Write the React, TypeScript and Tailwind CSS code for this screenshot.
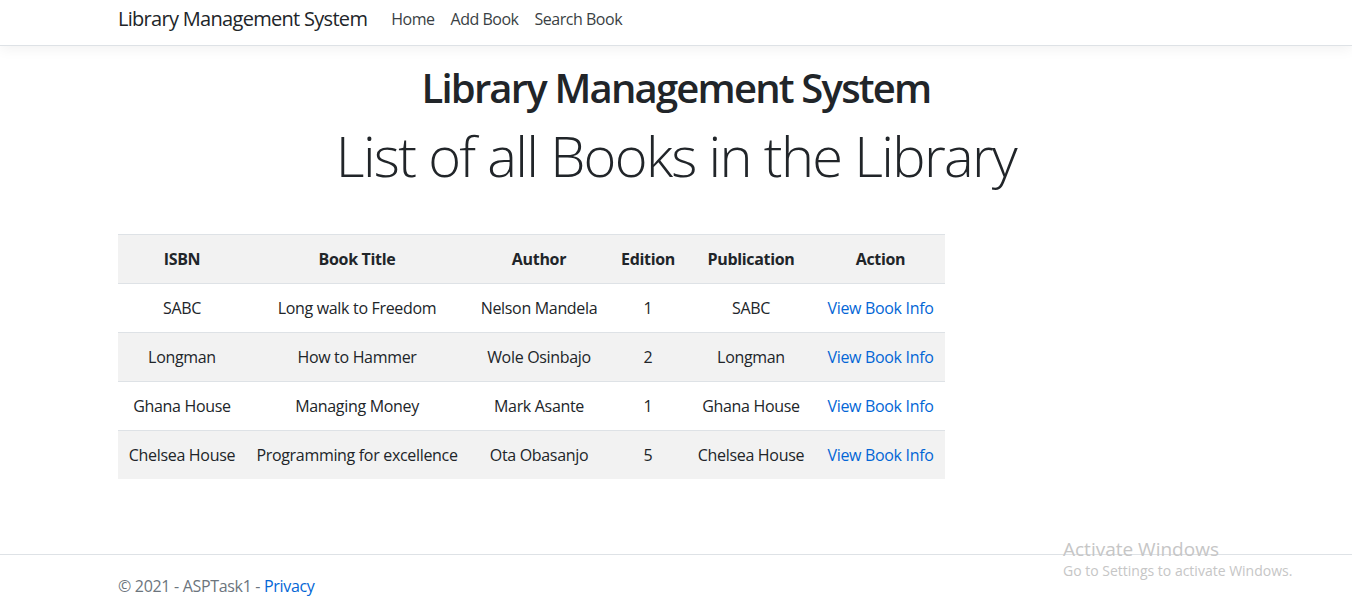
const books = [
  { isbn: "SABC", title: "Long walk to Freedom", author: "Nelson Mandela", edition: 1, publication: "SABC" },
  { isbn: "Longman", title: "How to Hammer", author: "Wole Osinbajo", edition: 2, publication: "Longman" },
  { isbn: "Ghana House", title: "Managing Money", author: "Mark Asante", edition: 1, publication: "Ghana House" },
  { isbn: "Chelsea House", title: "Programming for excellence", author: "Ota Obasanjo", edition: 5, publication: "Chelsea House" },
];

const cell = "border-t border-[#dee2e6] px-[6px] py-[12px] leading-[24px]";

export default function App() {
  return (
    <div className="relative flex h-[611px] flex-col overflow-hidden bg-white font-['Open_Sans',sans-serif] text-[16px] text-[#212529]">
      <header className="h-[46px] border-b border-[#dee2e6] shadow-[0_4px_12px_rgba(0,0,0,0.05)]">
        <div className="mx-auto flex h-[45px] w-[1116px] items-center pb-[8px] tracking-[-0.03em]">
          <a className="mr-[16px] text-[20px] leading-[30px] tracking-[-0.035em] text-[#212529]" href="#">
            Library Management System
          </a>
          <nav className="flex items-center">
            <a className="px-[8px] text-[#3a3f44]" href="#">Home</a>
            <a className="px-[8px] text-[#3a3f44]" href="#">Add Book</a>
            <a className="px-[8px] text-[#3a3f44]" href="#">Search Book</a>
          </nav>
        </div>
      </header>

      <main className="mx-auto w-[1116px] flex-1">
        <div className="pt-[18px] text-center">
          <h1 className="text-[40px] font-semibold leading-[48px] tracking-[-0.045em]">Library Management System</h1>
          <h2 className="mt-[10px] text-[56px] font-light leading-[67px] tracking-[-0.03em]">
            List of all Books in the Library
          </h2>
        </div>

        <table className="mt-[45px] table-fixed border-collapse text-center tracking-[-0.02em]">
          <colgroup>
            <col className="w-[128px]" />
            <col className="w-[222px]" />
            <col className="w-[142px]" />
            <col className="w-[76px]" />
            <col className="w-[130px]" />
            <col className="w-[129px]" />
          </colgroup>
          <thead>
            <tr className="bg-[#f2f2f2]">
              {["ISBN", "Book Title", "Author", "Edition", "Publication", "Action"].map((h) => (
                <th key={h} className={cell + " font-bold"}>
                  {h}
                </th>
              ))}
            </tr>
          </thead>
          <tbody>
            {books.map((b, i) => (
              <tr key={b.isbn} className={i % 2 === 1 ? "bg-[#f2f2f2]" : "bg-white"}>
                <td className={cell}>{b.isbn}</td>
                <td className={cell}>{b.title}</td>
                <td className={cell}>{b.author}</td>
                <td className={cell}>{b.edition}</td>
                <td className={cell}>{b.publication}</td>
                <td className={cell}>
                  <a className="text-[#0366d6]" href="#">View Book Info</a>
                </td>
              </tr>
            ))}
          </tbody>
        </table>
      </main>

      <footer className="h-[57px] border-t border-[#dee2e6] text-[#6c757d]">
        <div className="mx-auto w-[1116px] pt-[19px] leading-[24px] tracking-[-0.02em]">
          © 2021 - ASPTask1 - <a className="text-[#0366d6]" href="#">Privacy</a>
        </div>
      </footer>

      <div className="pointer-events-none absolute left-[1063px] top-[537px] text-[#c6c6c6]">
        <div className="text-[19px] leading-[24px]">Activate Windows</div>
        <div className="text-[14px] leading-[20px]">Go to Settings to activate Windows.</div>
      </div>
    </div>
  );
}
